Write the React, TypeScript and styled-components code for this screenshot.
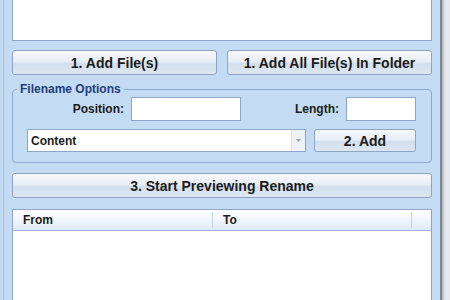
import styled, {createGlobalStyle} from "styled-components";

const GlobalStyle = createGlobalStyle`
  html, body {
    margin: 0;
    padding: 0;
    width: 450px;
    height: 300px;
    overflow: hidden;
    background: #d6dae0;
    font-family: "Liberation Sans", Arial, sans-serif;
  }
  * { box-sizing: border-box; }
`;

const Screen = styled.div`
  width: 450px;
  height: 300px;
  display: flex;
  overflow: hidden;
`;

const Window = styled.div`
  width: 442px;
  height: 300px;
  padding: 0 8px 0 12px;
  display: flex;
  flex-direction: column;
  background: #c4dbf4;
  box-shadow: inset 3px 0 0 #c4dbf4, inset 4px 0 0 #a9c3e2;
  border-right: 2px solid #7d8794;
  flex-shrink: 0;
`;

const Gutter = styled.div`
  flex: 1;
  background: linear-gradient(to right, #a9b1bb, #e4e7eb 3px);
`;

const FileList = styled.div`
  height: 43px;
  margin-top: -2px;
  background: #fff;
  border: 1px solid #8ba6c6;
  flex-shrink: 0;
`;

const ButtonRow = styled.div`
  display: flex;
  gap: 10px;
  margin-top: 9px;
`;

const Button = styled.button<{ $w?: number; $h?: number }>`
  ${({$w}) => ($w ? `width: ${$w}px;` : "flex: 1;")}
  height: ${({$h}) => $h ?? 25}px;
  padding: 0;
  border: 1px solid #8ea5c2;
  border-radius: 3px;
  background: linear-gradient(to bottom, #f7f9fc 0%, #e8eef6 45%, #d3dfed 55%, #dde7f2 100%);
  font-family: inherit;
  font-weight: bold;
  font-size: 14px;
  color: #1b1b1b;
  flex-shrink: 0;
`;

const WideButton = styled(Button)`
  flex: none;
  width: 100%;
  margin-top: 10px;
`;

const Group = styled.fieldset`
  margin: 7px 0 0 0;
  padding: 0 15px 10px 14px;
  border: 1px solid #8ca8ca;
  border-radius: 4px;
  min-width: 0;
`;

const Legend = styled.legend`
  padding: 0 3px;
  margin-left: -10px;
  font-size: 12px;
  font-weight: bold;
  color: #1e3e7b;
`;

const Row = styled.div<{ $mt: number }>`
  display: flex;
  align-items: center;
  margin-top: ${({$mt}) => $mt}px;
`;

const Label = styled.span<{ $w?: number }>`
  ${({$w}) => ($w ? `width: ${$w}px;` : "flex: 1;")}
  text-align: right;
  font-size: 12px;
  font-weight: bold;
  color: #1b1b1b;
  margin-right: 7px;
`;

const TextBox = styled.div<{ $w: number }>`
  width: ${({$w}) => $w}px;
  height: 24px;
  background: #fff;
  border: 1px solid #8ba6c6;
`;

const Combo = styled.div`
  width: 279px;
  height: 23px;
  background: #fff;
  border: 1px solid #8ba6c6;
  display: flex;
  align-items: center;
  margin-right: 8px;
`;

const ComboText = styled.span`
  flex: 1;
  padding-left: 3px;
  font-size: 12px;
  font-weight: bold;
  color: #1b1b1b;
`;

const ComboArrow = styled.div`
  width: 14px;
  height: 21px;
  background: #eef2f7;
  border-left: 1px solid #dde4ec;
  display: flex;
  align-items: center;
  justify-content: center;
`;

const ListView = styled.div`
  margin-top: 11px;
  flex: 1;
  background: #fff;
  border: 1px solid #8ba6c6;
  border-bottom: none;
`;

const Header = styled.div`
  display: flex;
  height: 21px;
  background: linear-gradient(to bottom, #ffffff 0%, #f1f6fd 50%, #dfe9f7 100%);
  border-bottom: 1px solid #9fb6d2;
`;

const Column = styled.div<{ $w?: number; $last?: boolean }>`
  ${({$w}) => ($w ? `width: ${$w}px;` : "flex: 1;")}
  display: flex;
  align-items: center;
  padding-left: 10px;
  font-size: 12px;
  font-weight: bold;
  color: #1b1b1b;
  border-right: ${({$last}) => ($last ? "none" : "1px solid #c5d2e2")};
  margin: 2px 0;
`;

export default function App() {
  return (
    <>
      <GlobalStyle />
      <Screen>
        <Window>
          <FileList />
          <ButtonRow>
            <Button>1. Add File(s)</Button>
            <Button>1. Add All File(s) In Folder</Button>
          </ButtonRow>
          <Group>
            <Legend>Filename Options</Legend>
            <Row $mt={1}>
              <Label $w={97}>Position:</Label>
              <TextBox $w={110} />
              <Label>Length:</Label>
              <TextBox $w={70} />
            </Row>
            <Row $mt={8}>
              <Combo>
                <ComboText>Content</ComboText>
                <ComboArrow>
                  <svg width="5" height="3" viewBox="0 0 5 3">
                    <path d="M0 0 H5 L2.5 3 Z" fill="#9aa3ad" />
                  </svg>
                </ComboArrow>
              </Combo>
              <Button $w={102} $h={23}>2. Add</Button>
            </Row>
          </Group>
          <WideButton>3. Start Previewing Rename</WideButton>
          <ListView>
            <Header>
              <Column $w={200}>From</Column>
              <Column $w={199}>To</Column>
              <Column $last />
            </Header>
          </ListView>
        </Window>
        <Gutter />
      </Screen>
    </>
  );
}
